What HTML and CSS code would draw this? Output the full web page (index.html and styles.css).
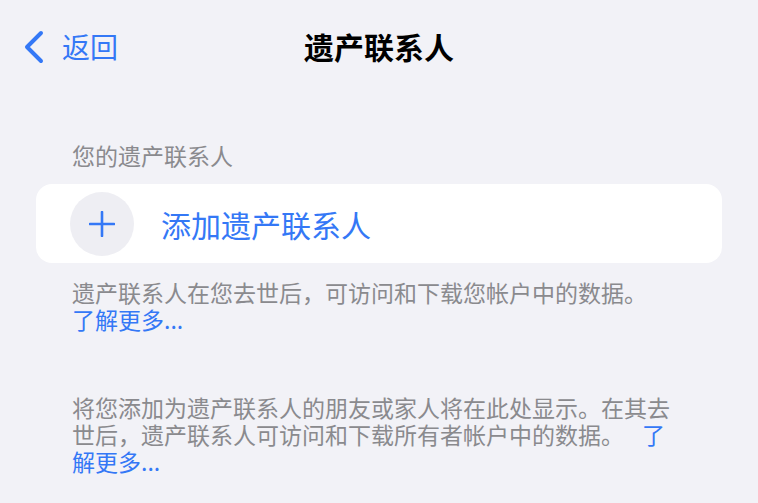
FILE: index.html
```html
<!DOCTYPE html>
<html lang="zh-CN">
<head>
<meta charset="utf-8">
<title>遗产联系人</title>
<link rel="stylesheet" href="styles.css">
</head>
<body>
<header class="nav">
  <a class="back">
    <svg class="chevron" width="22" height="34" viewBox="0 0 22 34"><polyline points="18,3 4,17 18,31" fill="none" stroke="#3478f6" stroke-width="4" stroke-linecap="round" stroke-linejoin="round"/></svg>
    <span class="back-text">返回</span>
  </a>
  <h1 class="title">遗产联系人</h1>
  <div class="nav-spacer"></div>
</header>
<main class="content">
  <div class="section-header">您的遗产联系人</div>
  <div class="card">
    <div class="add-circle">
      <svg width="26" height="26" viewBox="0 0 26 26"><line x1="1" y1="13" x2="25" y2="13" stroke="#3478f6" stroke-width="2.6" stroke-linecap="round"/><line x1="13" y1="1" x2="13" y2="25" stroke="#3478f6" stroke-width="2.6" stroke-linecap="round"/></svg>
    </div>
    <span class="add-text">添加遗产联系人</span>
  </div>
  <p class="footer footer-first">遗产联系人在您去世后，可访问和下载您帐户中的数据。<br><a class="link">了解更多...</a></p>
  <p class="footer footer-second">将您添加为遗产联系人的朋友或家人将在此处显示。在其去世后，遗产联系人可访问和下载所有者帐户中的数据。<a class="link link-gap">了解更多...</a></p>
</main>
</body>
</html>
```
FILE: styles.css
```css
html, body {
  margin: 0;
  padding: 0;
}
body {
  background: #f2f2f7;
  font-family: "Noto Sans CJK SC", "Noto Sans", sans-serif;
  width: 758px;
  height: 503px;
  overflow: hidden;
}
.nav {
  height: 92px;
  display: grid;
  grid-template-columns: 1fr auto 1fr;
  align-items: center;
}
.back {
  display: flex;
  align-items: center;
  padding-left: 23px;
  color: #3478f6;
}
.chevron {
  display: block;
  margin-top: 1px;
}
.back-text {
  font-size: 28px;
  line-height: 34px;
  margin-left: 17px;
}
.title {
  margin: 0;
  font-size: 30px;
  line-height: 36px;
  font-weight: 700;
  color: #000;
}
.content {
  display: flex;
  flex-direction: column;
}
.section-header {
  margin: 50px 0 0 72px;
  font-size: 23px;
  line-height: 27px;
  color: #8a8a8e;
}
.card {
  margin: 15px 36px 0 36px;
  height: 79px;
  background: #fff;
  border-radius: 16px;
  display: flex;
  align-items: center;
  padding-left: 34px;
}
.add-circle {
  width: 64px;
  height: 64px;
  border-radius: 50%;
  background: #eeeef3;
  display: flex;
  align-items: center;
  justify-content: center;
}
.add-circle svg {
  display: block;
}
.add-text {
  margin-left: 27px;
  font-size: 30px;
  line-height: 36px;
  color: #3478f6;
}
.footer {
  margin: 0;
  padding-left: 72px;
  width: 606px;
  font-size: 23px;
  line-height: 27px;
  color: #8a8a8e;
}
.footer-first {
  margin-top: 16px;
}
.footer-second {
  margin-top: 61px;
}
.link {
  color: #3478f6;
}
.link-gap {
  margin-left: 18px;
}
```
